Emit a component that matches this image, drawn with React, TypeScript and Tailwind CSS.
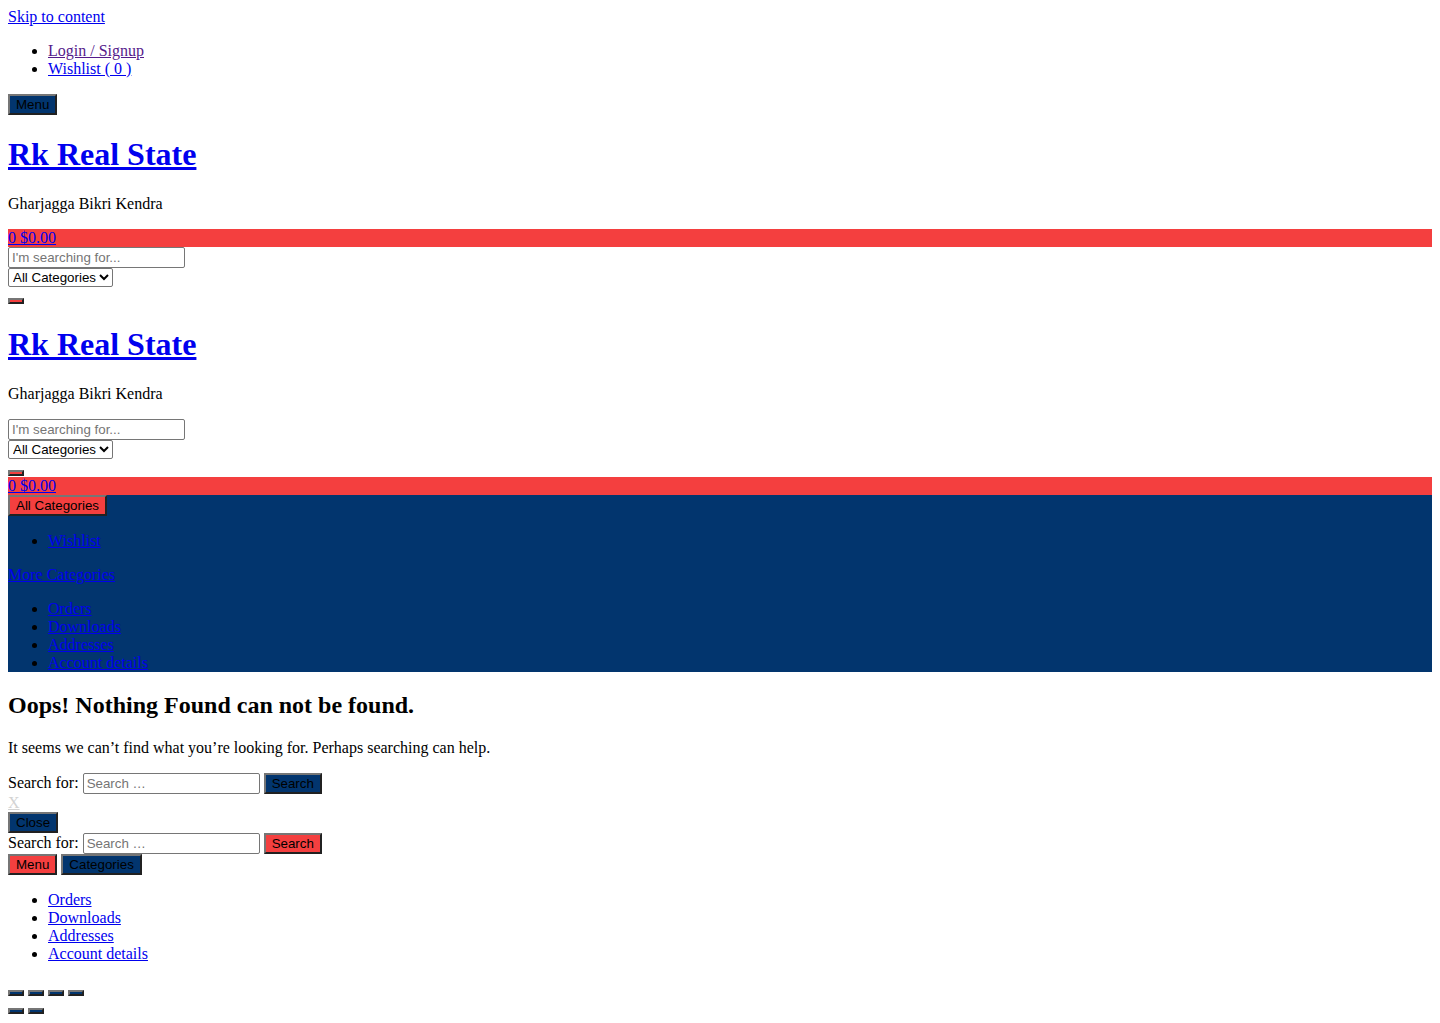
const navy = "bg-[#02356e]";
const red = "bg-[#f43f3f]";

function Btn({ bg, children }: { bg: string; children?: React.ReactNode }) {
  return (
    <button
      type="button"
      className={`${bg} inline-block border-2 [border-style:outset] border-[#767676] px-[6px] py-px font-['Liberation_Sans',Arial,sans-serif] text-[13.333px] leading-[normal] text-black align-baseline`}
    >
      {children}
    </button>
  );
}

function Link({ children, className = "" }: { children: React.ReactNode; className?: string }) {
  return (
    <a href="#" className={`underline ${className || "text-[#0000ee]"}`}>
      {children}
    </a>
  );
}

function SearchBox() {
  return (
    <input
      type="text"
      placeholder="I'm searching for..."
      className="w-[177px] border border-[#767676] rounded-[2px] px-[3px] py-[2px] font-['Liberation_Sans',Arial,sans-serif] text-[13.333px] leading-[normal] placeholder:text-[#757575]"
    />
  );
}

function CategorySelect() {
  return (
    <select className="border border-[#767676] rounded-[2px] bg-white px-0 font-['Liberation_Sans',Arial,sans-serif] text-[13.333px] leading-[normal] text-black">
      <option>All Categories</option>
    </select>
  );
}

function Brand() {
  return (
    <>
      <h1 className="text-[32px] font-bold my-[21.44px]">
        <Link>Rk Real State</Link>
      </h1>
      <p className="my-4">Gharjagga Bikri Kendra</p>
    </>
  );
}

function SearchForm({ bg }: { bg: string }) {
  return (
    <form>
      <label>
        Search for:{" "}
        <input
          type="search"
          placeholder="Search …"
          className="w-[177px] border border-[#767676] rounded-[2px] px-[3px] py-[2px] font-['Liberation_Sans',Arial,sans-serif] text-[13.333px] leading-[normal] placeholder:text-[#757575]"
        />
      </label>{" "}
      <Btn bg={bg}>Search</Btn>
    </form>
  );
}

function AccountList() {
  const items = ["Orders", "Downloads", "Addresses", "Account details"];
  return (
    <ul className="list-disc pl-10 my-4">
      {items.map((t) => (
        <li key={t}>
          <Link>{t}</Link>
        </li>
      ))}
    </ul>
  );
}

export default function App() {
  return (
    <div className="min-h-screen bg-white p-2 font-['Liberation_Serif','Times_New_Roman',serif] text-base leading-[normal] text-black">
      <Link>Skip to content</Link>
      <ul className="list-disc pl-10 my-4">
        <li>
          <Link className="text-[#551a8b]">Login / Signup</Link>
        </li>
        <li>
          <Link>Wishlist ( 0 )</Link>
        </li>
      </ul>
      <Btn bg={navy}>Menu</Btn>

      {/* header, first copy */}
      <Brand />
      <div className={red}>
        <Link>0 $0.00</Link>
      </div>
      <div>
        <SearchBox />
      </div>
      <div>
        <CategorySelect />
      </div>
      <div>
        <Btn bg={red} />
      </div>

      {/* header, sticky copy */}
      <Brand />
      <div>
        <SearchBox />
      </div>
      <div>
        <CategorySelect />
      </div>
      <div>
        <Btn bg={red} />
      </div>
      <div className={red}>
        <Link>0 $0.00</Link>
      </div>

      <div className={navy}>
        <Btn bg={red}>All Categories</Btn>
        <ul className="list-disc pl-10 my-4">
          <li>
            <Link>Wishlist</Link>
          </li>
        </ul>
        <Link>More Categories</Link>
        <AccountList />
      </div>

      <h1 className="text-[24px] font-bold my-[19.92px]">Oops! Nothing Found can not be found.</h1>
      <p className="my-4">It seems we can’t find what you’re looking for. Perhaps searching can help.</p>
      <SearchForm bg={navy} />

      <div>
        <Link className="text-[#d3d3d3]">X</Link>
      </div>
      <div>
        <Btn bg={navy}>Close</Btn>
      </div>
      <SearchForm bg={red} />
      <div>
        <Btn bg={red}>Menu</Btn> <Btn bg={navy}>Categories</Btn>
      </div>
      <AccountList />
      <div>
        <Btn bg={navy} /> <Btn bg={navy} /> <Btn bg={navy} /> <Btn bg={navy} />
      </div>
      <div>
        <Btn bg={navy} /> <Btn bg={navy} />
      </div>
    </div>
  );
}
